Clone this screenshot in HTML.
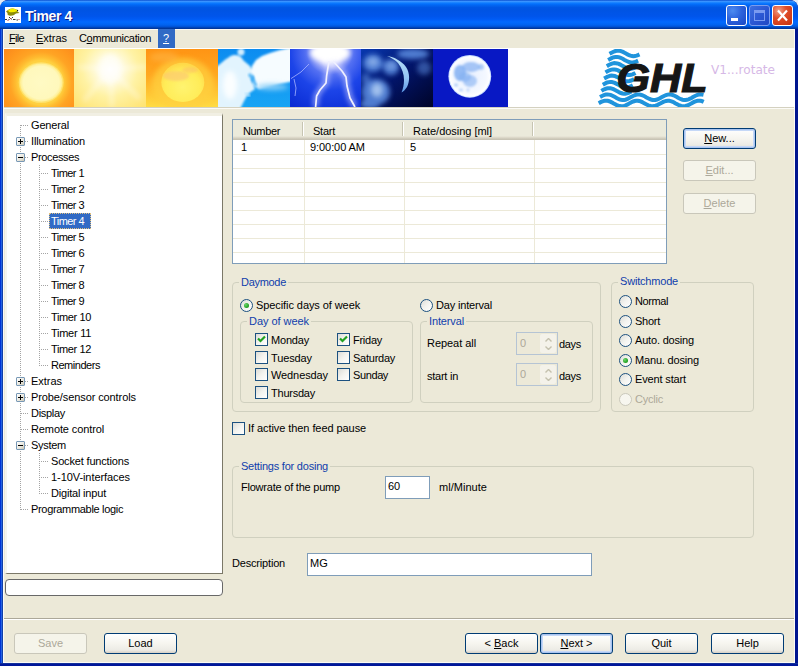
<!DOCTYPE html>
<html><head><meta charset="utf-8"><title>Timer 4</title>
<style>*{box-sizing:border-box;margin:0;padding:0}
html,body{width:798px;height:666px;overflow:hidden;background:#e4ecf8}
body{position:relative;font-family:"Liberation Sans",sans-serif;font-size:11px;color:#000;line-height:13px}
.a,.t{position:absolute;white-space:nowrap}
.t{font-size:11px;line-height:13px;height:13px}
#win{left:0;top:0;width:798px;height:666px;background:linear-gradient(to right,#0033d4 0,#0033d4 1px,#2462e2 1px,#2462e2 2px,#1240a8 2px,#1240a8 3px,#00158f 3px,#00158f 100%);border-radius:8px 8px 0 0;overflow:hidden}
#tb{left:0;top:0;width:798px;height:29px;border-radius:8px 8px 0 0;
background:linear-gradient(to bottom,#0a4fd0 0%,#3a93ff 5%,#288eff 7%,#127dff 10%,#036ffc 14%,#0262ee 20%,#0057e5 26%,#0054e3 34%,#0055eb 56%,#005bf5 66%,#026afe 76%,#0062ef 86%,#0052d6 92%,#0040ab 96%,#003092 100%)}
.ttl{font-weight:bold;font-size:14px;line-height:16px;height:16px;color:#fff;text-shadow:1px 1px 0 #0a1883}
#client{left:3px;top:29px;width:792px;height:634px;background:#ece9d8;border:1px solid #fbfaf6;border-top:0}
.tbtn{top:5px;width:21px;height:21px;border:1px solid #fff;border-radius:3px;background:radial-gradient(circle at 30% 25%,#4d8bf0 0%,#2d63dc 45%,#1a47c4 100%)}
u{text-decoration:underline}
.btn{height:21px;width:73px;border:1px solid #003c74;border-radius:3px;background:linear-gradient(to bottom,#ffffff 0%,#f6f5ef 50%,#ecebe5 85%,#d6d0c5 100%)}
.btn.def{box-shadow:inset 0 0 0 1px #a9c4f0, inset 0 0 0 2px #c5d8f7}
.btn.dis{border-color:#c9c7ba;background:#f5f4ea}
.bt{text-align:center;width:73px}
.gb{border:1px solid #d0d0bf;border-radius:4px}
.gl{color:#0046d5;background:#ece9d8}
.cb{width:13px;height:13px;border:1px solid #1c5180;background:linear-gradient(135deg,#dcdcd7 0%,#f3f3ef 50%,#ffffff 100%)}
.rb{width:13px;height:13px;border:1px solid #1c5180;border-radius:50%;background:linear-gradient(135deg,#dcdcd7 0%,#f3f3ef 50%,#ffffff 100%)}
.rb.on::after{content:"";position:absolute;left:3px;top:3px;width:5px;height:5px;border-radius:50%;background:radial-gradient(circle at 35% 35%,#6bd66b,#1f9e1f 70%)}
.rb.dis{border-color:#cac8bb;background:#f7f6ef}
.inp{border:1px solid #7f9db9;background:#fff}
.gray{color:#aca899}
</style></head><body>
<div class="a" id="win">
<div class="a" id="tb"></div>
<svg class="a" style="left:5px;top:7px" width="16" height="16" viewBox="0 0 16 16"><rect width="16" height="16" fill="#fff"/><path d="M3 3 Q7 0.5 11 2.5 L13.5 3 L12.5 4.5 L14.5 6 L11 6.5 Q8 9.5 4 8.5 Q2 8 2.5 6 L1 4.5 Z" fill="#8c8c08"/><path d="M3 3.2 Q7 0.2 11 2.4 L12.5 4 Q8 6 4 5 Z" fill="#f6ee00"/><rect x="12" y="3" width="1" height="1" fill="#222"/><path d="M0 12.5 h2 M3.5 12.5 h1 M6 12 h1 M8 12.5 h2.5 M11.5 13 h1.5 M4 10.5 h1 M7 10.5 h1" stroke="#333" stroke-width="1" fill="none"/><path d="M2.5 13.5 h1 M5 11.5 h1 M13.5 12.5 h1" stroke="#c04040" stroke-width="1" fill="none"/></svg>
<div class="t ttl" style="left:25px;top:8px;letter-spacing:-0.36px;">Timer 4</div>
<div class="a tbtn" style="left:726px"></div>
<div class="a" style="left:731px;top:18px;width:7px;height:3px;background:#fff"></div>
<div class="a tbtn" style="left:749px;border-color:#7c9cec;background:linear-gradient(135deg,#3d6fe0 0%,#2c58d4 50%,#2048c4 100%)"></div>
<div class="a" style="left:754px;top:10px;width:11px;height:11px;border:1px solid #7a9af0;border-top-width:3px"></div>
<div class="a tbtn" style="left:772px;background:radial-gradient(circle at 30% 25%,#f0a088 0%,#e04c28 40%,#c4300f 100%)"></div>
<svg class="a" style="left:772px;top:5px" width="21" height="21" viewBox="0 0 21 21"><path d="M6 5.5 L15 15.5 M15 5.5 L6 15.5" stroke="#fff" stroke-width="2.2" fill="none"/></svg>
<div class="a" style="left:0;top:663px;width:798px;height:3px;background:linear-gradient(to bottom,#12309a 0,#12309a 1px,#00179a 1px,#00179a 3px)"></div>
<div class="a" id="client"></div>
<div class="a" style="left:3px;top:29px;width:792px;height:1px;background:#fbfaf6"></div>
<div class="a" style="left:4px;top:107px;width:790px;height:1px;background:#d4d1c0"></div>
<div class="a" style="left:4px;top:108px;width:790px;height:1px;background:#fcfbf7"></div>
<div class="t" style="left:9px;top:32px;letter-spacing:-0.69px;"><u>F</u>ile</div>
<div class="t" style="left:36px;top:32px;letter-spacing:-0.03px;"><u>E</u>xtras</div>
<div class="t" style="left:79px;top:32px;letter-spacing:-0.34px;">C<u>o</u>mmunication</div>
<div class="a" style="left:158px;top:29px;width:17px;height:19px;background:#316ac5"></div>
<div class="t" style="left:163px;top:32px;color:#fff"><u>?</u></div>
<div class="a" style="left:4px;top:48px;width:791px;height:59px;background:#fff"></div>
<svg class="a" style="left:4px;top:49px" width="791" height="58" viewBox="0 0 791 58">
<defs>
<radialGradient id="g1" cx="37" cy="33.6" r="48" gradientUnits="userSpaceOnUse"><stop offset="0" stop-color="#ffe060"/><stop offset=".46" stop-color="#ffd040"/><stop offset=".53" stop-color="#ffbc30"/><stop offset=".64" stop-color="#ffa424"/><stop offset=".8" stop-color="#ff981e"/><stop offset="1" stop-color="#fc8a1c"/></radialGradient>
<radialGradient id="g1s" cx=".5" cy=".5" r=".5"><stop offset="0" stop-color="#fffac4"/><stop offset=".85" stop-color="#fff8bc"/><stop offset="1" stop-color="#ffee90"/></radialGradient>
<radialGradient id="g2" cx="106" cy="20" r="50" gradientUnits="userSpaceOnUse"><stop offset="0" stop-color="#ffffff"/><stop offset=".25" stop-color="#fffbe0"/><stop offset=".55" stop-color="#fff2a4"/><stop offset="1" stop-color="#ffe474"/></radialGradient>
<linearGradient id="g3" x1="0" y1="0" x2="0" y2="1"><stop offset="0" stop-color="#ff9414"/><stop offset=".45" stop-color="#ffa820"/><stop offset="1" stop-color="#ffdc44"/></linearGradient>
<radialGradient id="g3s" cx=".5" cy=".62" r=".6"><stop offset="0" stop-color="#fff470"/><stop offset=".7" stop-color="#ffec58"/><stop offset="1" stop-color="#ffd848"/></radialGradient>
<linearGradient id="g4" x1="0" y1="0" x2="0" y2="1"><stop offset="0" stop-color="#0c8cf0"/><stop offset="1" stop-color="#18a4f4"/></linearGradient>
<radialGradient id="g5" cx="326" cy="2" r="66" gradientUnits="userSpaceOnUse"><stop offset="0" stop-color="#ffffff"/><stop offset=".16" stop-color="#e8e4ff"/><stop offset=".36" stop-color="#5470f2"/><stop offset=".6" stop-color="#1c44e8"/><stop offset="1" stop-color="#0a2cd4"/></radialGradient>
<linearGradient id="g6" x1="0" y1="0" x2="1" y2="1"><stop offset="0" stop-color="#0838b0"/><stop offset=".5" stop-color="#021468"/><stop offset="1" stop-color="#000428"/></linearGradient>
<radialGradient id="g7m" cx=".5" cy=".5" r=".5"><stop offset="0" stop-color="#e8f0ff"/><stop offset=".8" stop-color="#f4f8ff"/><stop offset="1" stop-color="#ffffff"/></radialGradient>
<filter id="b1" x="-20%" y="-20%" width="140%" height="140%"><feGaussianBlur stdDeviation="1.2"/></filter>
<filter id="b2" x="-30%" y="-30%" width="160%" height="160%"><feGaussianBlur stdDeviation="2.5"/></filter>
<filter id="b05" x="-20%" y="-20%" width="140%" height="140%"><feGaussianBlur stdDeviation=".6"/></filter>
<clipPath id="c2"><rect x="70" y="0" width="72" height="58"/></clipPath>
<clipPath id="c3"><rect x="142" y="0" width="72" height="58"/></clipPath>
<clipPath id="c4"><rect x="214" y="0" width="72" height="58"/></clipPath>
<clipPath id="c5"><rect x="286" y="0" width="71" height="58"/></clipPath>
<clipPath id="c6"><rect x="357" y="0" width="72" height="58"/></clipPath>
<clipPath id="c7"><rect x="429" y="0" width="75" height="58"/></clipPath>
</defs>
<!-- tile1 sun -->
<rect x="0" y="0" width="70" height="58" fill="url(#g1)"/>
<ellipse cx="37.2" cy="33.6" rx="22.4" ry="20.4" fill="#ffe26c" filter="url(#b05)"/>
<ellipse cx="37.2" cy="33.6" rx="21.2" ry="19.2" fill="url(#g1s)" filter="url(#b05)"/>
<!-- tile2 bright -->
<g clip-path="url(#c2)">
<rect x="70" y="0" width="72" height="58" fill="url(#g2)"/>
<ellipse cx="106" cy="20" rx="11" ry="15" fill="#fff" opacity=".55" filter="url(#b2)"/>
<g stroke="#fff" stroke-width="5" opacity=".3" filter="url(#b2)"><path d="M106 20 L80 52 M106 20 L136 50 M106 20 L108 58 M106 20 L74 18 M106 20 L142 18"/></g>
</g>
<!-- tile3 hazy sun -->
<g clip-path="url(#c3)">
<rect x="142" y="0" width="72" height="58" fill="url(#g3)"/>
<ellipse cx="179" cy="36" rx="31" ry="27" fill="#ffd040" opacity=".7" filter="url(#b2)"/>
<ellipse cx="178.8" cy="33.3" rx="21.5" ry="19.6" fill="url(#g3s)" filter="url(#b05)"/>
<ellipse cx="172" cy="27" rx="13" ry="5" fill="#fcc474" opacity=".6" filter="url(#b1)"/>
<ellipse cx="186" cy="21" rx="8" ry="3" fill="#fcbc6c" opacity=".5" filter="url(#b1)"/>
<ellipse cx="160" cy="8" rx="14" ry="5" fill="#ffb848" opacity=".5" filter="url(#b2)"/>
</g>
<!-- tile4 clouds -->
<g clip-path="url(#c4)">
<rect x="214" y="0" width="72" height="58" fill="url(#g4)"/>
<g filter="url(#b1)">
<path d="M210 20 L222 10 L230 6 L236 8 L240 12 L246 17 L249 24 L247 31 L251 40 L244 45 L240 52 L235 62 L210 62 Z" fill="#e2f4fe"/>
<path d="M248 17 L252 11 L258 7 L266 4 L276 1 L290 -2 L290 32 L276 35 L264 38 L255 40 L249 36 L250 28 L247 22 Z" fill="#f6fcff"/>
<ellipse cx="237" cy="3" rx="3.5" ry="3.5" fill="#d0ecfe"/>
<ellipse cx="231" cy="12" rx="8" ry="6" fill="#e2f4fe"/>
</g>
<g filter="url(#b2)"><ellipse cx="268" cy="38" rx="16" ry="3" fill="#8cd0f8"/><ellipse cx="226" cy="36" rx="7" ry="14" fill="#fbfeff"/></g>
<path d="M245 25 L249 30 L252 37" fill="none" stroke="#40acf4" stroke-width="3" opacity=".85" filter="url(#b1)"/>
<path d="M241 44 L246 47" fill="none" stroke="#bfe6fc" stroke-width="3" opacity=".8" filter="url(#b1)"/>
</g>
<!-- tile5 lightning -->
<g clip-path="url(#c5)">
<rect x="286" y="0" width="71" height="58" fill="url(#g5)"/>
<ellipse cx="326" cy="4" rx="20" ry="9" fill="#fff" filter="url(#b2)"/>
<ellipse cx="327" cy="10" rx="8" ry="8" fill="#fff" opacity=".8" filter="url(#b2)"/>
<g fill="none" stroke="#c4c8ff" stroke-width="6" opacity=".6" filter="url(#b2)" stroke-linejoin="round">
<path d="M325 14 L322.6 27 L322 34 L316 41 L312.6 47 L311.6 58"/>
<path d="M329 14 L338 22 L342 28 L343 37 L346 49 L351 58"/>
</g>
<g fill="none" stroke="#f0f0ff" stroke-width="1.7" filter="url(#b05)" stroke-linejoin="round">
<path d="M325 12 L322.6 27 L322 34 L316 41 L312.6 47 L311.6 58"/>
<path d="M329 12 L338 22 L342 28 L343 37 L346 49 L351 58"/>
</g>
<path d="M305 15 L297 23 L287 29.6 M290 30 L292 39 L291 47" fill="none" stroke="#a8b4ff" stroke-width="1" opacity=".8"/>
</g>
<!-- tile6 crescent -->
<g clip-path="url(#c6)">
<rect x="357" y="0" width="72" height="58" fill="url(#g6)"/>
<g filter="url(#b2)" fill="#5888dc" opacity=".9">
<ellipse cx="369" cy="14" rx="10" ry="9"/>
<ellipse cx="387" cy="18" rx="8" ry="8"/>
<ellipse cx="372" cy="43" rx="14" ry="13"/>
<ellipse cx="366" cy="55" rx="10" ry="5"/>
<ellipse cx="409" cy="5" rx="16" ry="5"/>
<ellipse cx="420" cy="19" rx="7" ry="7" opacity=".6"/>
<ellipse cx="362" cy="30" rx="4" ry="6" opacity=".7"/>
</g>
<ellipse cx="373" cy="41" rx="6" ry="7" fill="#b4d0f4" opacity=".8" filter="url(#b2)"/>
<ellipse cx="369" cy="13" rx="5" ry="4" fill="#a4c4f2" opacity=".65" filter="url(#b2)"/>
<ellipse cx="387" cy="17" rx="4" ry="3" fill="#a0c0f0" opacity=".5" filter="url(#b2)"/>
<linearGradient id="g6c" x1="0" y1="0" x2="0" y2="1"><stop offset="0" stop-color="#b8e0f8"/><stop offset=".6" stop-color="#94c4f4"/><stop offset="1" stop-color="#5c98e8"/></linearGradient>
<path d="M383 7 C390 8 398 12 402 18 C406 24 406 32 403 38 C401 41 399 43 397.5 43.5 C399 40 400 36 400 31 C400 25 398 19 394 14 C391 11 387 8.5 383 7Z" fill="url(#g6c)" filter="url(#b05)"/>
</g>
<!-- tile7 full moon -->
<g clip-path="url(#c7)">
<rect x="429" y="0" width="75" height="58" fill="#0818c4"/>
<circle cx="465.8" cy="27.3" r="21.4" fill="#c8dcff" filter="url(#b05)"/>
<circle cx="465.8" cy="27.3" r="20.4" fill="url(#g7m)"/>
<g filter="url(#b1)" fill="#84b0f2">
<ellipse cx="456" cy="24" rx="6" ry="8" opacity=".85"/>
<ellipse cx="467" cy="18" rx="9" ry="5" opacity=".7"/>
<ellipse cx="466" cy="32" rx="7" ry="6" opacity=".6"/>
<ellipse cx="461" cy="28" rx="6" ry="5" opacity=".6"/>
<ellipse cx="477" cy="18" rx="3" ry="3" opacity=".6"/>
<ellipse cx="452" cy="36" rx="2" ry="1.5" opacity=".6"/>
<ellipse cx="457" cy="41" rx="2" ry="1.5" opacity=".5"/>
<ellipse cx="464" cy="41" rx="1.5" ry="1.5" opacity=".5"/>
</g>
</g>
<!-- GHL logo -->
<g fill="none" stroke="#2094dc" stroke-width="4">
<path d="M605.5 4.8 L607.0 4.0 L608.5 3.2 L610.0 2.5 L611.5 2.0 L613.0 1.7 L614.5 1.6 L616.0 1.8 L617.5 2.3 L619.0 2.9 L620.5 3.7 L622.0 4.5 L623.5 5.4 L625.0 6.1 L626.5 6.7 L628.0 7.1 L629.5 7.2 L631.0 7.1 L632.5 6.7 L634.0 6.1 L635.5 5.4"/>
<path d="M604.1 11.0 L605.6 10.2 L607.1 9.4 L608.6 8.7 L610.1 8.2 L611.6 7.9 L613.1 7.9 L614.6 8.1 L616.1 8.6 L617.6 9.3 L619.1 10.0 L620.6 10.9 L622.1 11.7 L623.6 12.4 L625.1 13.0 L626.6 13.4 L628.1 13.5 L629.6 13.3 L631.1 12.9 L632.6 12.3 L634.1 11.6"/>
<path d="M602.8 17.2 L604.3 16.3 L605.8 15.5 L607.3 14.9 L608.8 14.4 L610.3 14.1 L611.8 14.2 L613.3 14.4 L614.8 14.9 L616.3 15.6 L617.8 16.4 L619.3 17.2 L620.8 18.1 L622.3 18.8 L623.8 19.3 L625.3 19.6 L626.8 19.7 L628.3 19.5 L629.8 19.1 L631.3 18.5 L632.8 17.7"/>
<path d="M601.5 23.4 L603.0 22.5 L604.5 21.7 L606.0 21.1 L607.5 20.6 L609.0 20.4 L610.5 20.4 L612.0 20.7 L613.5 21.2 L615.0 21.9 L616.5 22.7 L618.0 23.6 L619.5 24.4 L621.0 25.1 L622.5 25.6 L624.0 25.9 L625.5 26.0 L627.0 25.8 L628.5 25.3 L630.0 24.7 L631.5 23.9"/>
<path d="M600.1 29.5 L601.6 28.7 L603.1 27.9 L604.6 27.3 L606.1 26.8 L607.6 26.6 L609.1 26.7 L610.6 27.0 L612.1 27.6 L613.6 28.3 L615.1 29.1 L616.6 29.9 L618.1 30.7 L619.6 31.4 L621.1 31.9 L622.6 32.2 L624.1 32.2 L625.6 32.0 L627.1 31.5 L628.6 30.9 L630.1 30.1"/>
<path d="M598.8 35.7 L600.2 34.9 L601.8 34.1 L603.2 33.5 L604.8 33.1 L606.2 32.9 L607.8 33.0 L609.2 33.3 L610.8 33.9 L612.2 34.6 L613.8 35.4 L615.2 36.3 L616.8 37.1 L618.2 37.7 L619.8 38.2 L621.2 38.5 L622.8 38.5 L624.2 38.2 L625.8 37.7 L627.2 37.1 L628.8 36.3"/>
<path d="M597.4 41.9 L598.9 41.0 L600.4 40.3 L601.9 39.7 L603.4 39.3 L604.9 39.2 L606.4 39.3 L607.9 39.6 L609.4 40.2 L610.9 40.9 L612.4 41.8 L613.9 42.6 L615.4 43.4 L616.9 44.0 L618.4 44.5 L619.9 44.7 L621.4 44.7 L622.9 44.4 L624.4 43.9 L625.9 43.2 L627.4 42.4"/>
<path d="M596.0 48.0 L597.5 47.2 L599.0 46.5 L600.5 45.9 L602.0 45.5 L603.5 45.4 L605.0 45.6 L606.5 45.9 L608.0 46.5 L609.5 47.3 L611.0 48.1 L612.5 48.9 L614.0 49.7 L615.5 50.4 L617.0 50.8 L618.5 51.0 L620.0 51.0 L621.5 50.7 L623.0 50.1 L624.5 49.4 L626.0 48.6 L627.5 47.8 L629.0 47.0 L630.5 46.3 L632.0 45.8 L633.5 45.5 L635.0 45.4 L636.5 45.7 L638.0 46.1 L639.5 46.8 L641.0 47.5 L642.5 48.4 L644.0 49.2 L645.5 50.0 L647.0 50.5 L648.5 50.9 L650.0 51.0 L651.5 50.9 L653.0 50.5 L654.5 49.9 L656.0 49.2 L657.5 48.3 L659.0 47.5 L660.5 46.7 L662.0 46.1 L663.5 45.6 L665.0 45.4 L666.5 45.5 L668.0 45.8 L669.5 46.3 L671.0 47.0 L672.5 47.8 L674.0 48.7 L675.5 49.5 L677.0 50.2 L678.5 50.7 L680.0 51.0 L681.5 51.0 L683.0 50.8 L684.5 50.3 L686.0 49.7 L687.5 48.9 L689.0 48.0 L690.5 47.2 L692.0 46.5 L693.5 45.9 L695.0 45.5 L696.5 45.4 L698.0 45.6 L699.5 45.9"/>
<path d="M594.7 54.2 L596.2 53.4 L597.7 52.7 L599.2 52.1 L600.7 51.8 L602.2 51.7 L603.7 51.8 L605.2 52.2 L606.7 52.9 L608.2 53.6 L609.7 54.5 L611.2 55.3 L612.7 56.1 L614.2 56.7 L615.7 57.1 L617.2 57.3 L618.7 57.2 L620.2 56.9 L621.7 56.3 L623.2 55.6 L624.7 54.8 L626.2 53.9 L627.7 53.1 L629.2 52.5 L630.7 52.0 L632.2 51.7 L633.7 51.7 L635.2 52.0 L636.7 52.4 L638.2 53.1 L639.7 53.9 L641.2 54.7 L642.7 55.6 L644.2 56.3 L645.7 56.8 L647.2 57.2 L648.7 57.3 L650.2 57.1 L651.7 56.7 L653.2 56.1 L654.7 55.3 L656.2 54.5 L657.7 53.7 L659.2 52.9 L660.7 52.3 L662.2 51.9 L663.7 51.7 L665.2 51.8 L666.7 52.1 L668.2 52.6 L669.7 53.3 L671.2 54.2 L672.7 55.0 L674.2 55.8 L675.7 56.5 L677.2 57.0 L678.7 57.2 L680.2 57.3 L681.7 57.0 L683.2 56.5 L684.7 55.9 L686.2 55.1 L687.7 54.2 L689.2 53.4 L690.7 52.7 L692.2 52.1 L693.7 51.8 L695.2 51.7 L696.7 51.8 L698.2 52.2 L699.7 52.9"/>
</g>
<text x="612.5" y="43" font-family="'Liberation Sans',sans-serif" font-weight="bold" font-style="italic" font-size="40.5" fill="#161616" stroke="#161616" stroke-width="1.2" textLength="91" lengthAdjust="spacingAndGlyphs">GHL</text>
<text x="707" y="25" font-family="'DejaVu Sans','Liberation Sans',sans-serif" font-size="11.5" fill="#d6b8e6" textLength="64" lengthAdjust="spacingAndGlyphs">V1...rotate</text>
</svg>
<div class="a" style="left:5px;top:113px;width:218px;height:461px;background:#fff;border:1px solid;border-top:3px solid #f1efe3;border-right-color:#7b7868;border-bottom-color:#7b7868;border-left:2px solid #f6f5ee"></div>
<div class="a" style="left:20px;top:125px;width:1px;height:385px;background:repeating-linear-gradient(to bottom,#a4a4a4 0 1px,transparent 1px 2px)"></div>
<div class="a" style="left:39px;top:165px;width:1px;height:201px;background:repeating-linear-gradient(to bottom,#a4a4a4 0 1px,transparent 1px 2px)"></div>
<div class="a" style="left:39px;top:453px;width:1px;height:41px;background:repeating-linear-gradient(to bottom,#a4a4a4 0 1px,transparent 1px 2px)"></div>
<div class="a" style="left:21px;top:125px;height:1px;width:8px;background:repeating-linear-gradient(to right,#a4a4a4 0 1px,transparent 1px 2px)"></div>
<div class="t" style="left:31px;top:119px;letter-spacing:-0.16px;">General</div>
<div class="a" style="left:21px;top:141px;height:1px;width:8px;background:repeating-linear-gradient(to right,#a4a4a4 0 1px,transparent 1px 2px)"></div>
<div class="t" style="left:31px;top:135px;letter-spacing:-0.14px;">Illumination</div>
<div class="a" style="left:16px;top:137px;width:9px;height:9px;border:1px solid #7898b5;border-radius:1px;background:linear-gradient(135deg,#fff 0%,#e8e6dc 60%,#c9c5b4 100%)"></div>
<div class="a" style="left:18px;top:141px;width:5px;height:1px;background:#000"></div>
<div class="a" style="left:20px;top:139px;width:1px;height:5px;background:#000"></div>
<div class="a" style="left:21px;top:157px;height:1px;width:8px;background:repeating-linear-gradient(to right,#a4a4a4 0 1px,transparent 1px 2px)"></div>
<div class="t" style="left:31px;top:151px;letter-spacing:-0.37px;">Processes</div>
<div class="a" style="left:16px;top:153px;width:9px;height:9px;border:1px solid #7898b5;border-radius:1px;background:linear-gradient(135deg,#fff 0%,#e8e6dc 60%,#c9c5b4 100%)"></div>
<div class="a" style="left:18px;top:157px;width:5px;height:1px;background:#000"></div>
<div class="a" style="left:41px;top:173px;height:1px;width:8px;background:repeating-linear-gradient(to right,#a4a4a4 0 1px,transparent 1px 2px)"></div>
<div class="t" style="left:51px;top:167px;letter-spacing:-0.55px;">Timer 1</div>
<div class="a" style="left:41px;top:189px;height:1px;width:8px;background:repeating-linear-gradient(to right,#a4a4a4 0 1px,transparent 1px 2px)"></div>
<div class="t" style="left:51px;top:183px;letter-spacing:-0.55px;">Timer 2</div>
<div class="a" style="left:41px;top:205px;height:1px;width:8px;background:repeating-linear-gradient(to right,#a4a4a4 0 1px,transparent 1px 2px)"></div>
<div class="t" style="left:51px;top:199px;letter-spacing:-0.55px;">Timer 3</div>
<div class="a" style="left:41px;top:221px;height:1px;width:8px;background:repeating-linear-gradient(to right,#a4a4a4 0 1px,transparent 1px 2px)"></div>
<div class="a" style="left:49px;top:213px;width:42px;height:16px;background:#316ac5;border:1px dotted #e0c080"></div>
<div class="t" style="left:51px;top:215px;letter-spacing:-0.55px;color:#fff">Timer 4</div>
<div class="a" style="left:41px;top:237px;height:1px;width:8px;background:repeating-linear-gradient(to right,#a4a4a4 0 1px,transparent 1px 2px)"></div>
<div class="t" style="left:51px;top:231px;letter-spacing:-0.55px;">Timer 5</div>
<div class="a" style="left:41px;top:253px;height:1px;width:8px;background:repeating-linear-gradient(to right,#a4a4a4 0 1px,transparent 1px 2px)"></div>
<div class="t" style="left:51px;top:247px;letter-spacing:-0.55px;">Timer 6</div>
<div class="a" style="left:41px;top:269px;height:1px;width:8px;background:repeating-linear-gradient(to right,#a4a4a4 0 1px,transparent 1px 2px)"></div>
<div class="t" style="left:51px;top:263px;letter-spacing:-0.55px;">Timer 7</div>
<div class="a" style="left:41px;top:285px;height:1px;width:8px;background:repeating-linear-gradient(to right,#a4a4a4 0 1px,transparent 1px 2px)"></div>
<div class="t" style="left:51px;top:279px;letter-spacing:-0.55px;">Timer 8</div>
<div class="a" style="left:41px;top:301px;height:1px;width:8px;background:repeating-linear-gradient(to right,#a4a4a4 0 1px,transparent 1px 2px)"></div>
<div class="t" style="left:51px;top:295px;letter-spacing:-0.55px;">Timer 9</div>
<div class="a" style="left:41px;top:317px;height:1px;width:8px;background:repeating-linear-gradient(to right,#a4a4a4 0 1px,transparent 1px 2px)"></div>
<div class="t" style="left:51px;top:311px;letter-spacing:-0.38px;">Timer 10</div>
<div class="a" style="left:41px;top:333px;height:1px;width:8px;background:repeating-linear-gradient(to right,#a4a4a4 0 1px,transparent 1px 2px)"></div>
<div class="t" style="left:51px;top:327px;letter-spacing:-0.27px;">Timer 11</div>
<div class="a" style="left:41px;top:349px;height:1px;width:8px;background:repeating-linear-gradient(to right,#a4a4a4 0 1px,transparent 1px 2px)"></div>
<div class="t" style="left:51px;top:343px;letter-spacing:-0.38px;">Timer 12</div>
<div class="a" style="left:41px;top:365px;height:1px;width:8px;background:repeating-linear-gradient(to right,#a4a4a4 0 1px,transparent 1px 2px)"></div>
<div class="t" style="left:51px;top:359px;letter-spacing:-0.47px;">Reminders</div>
<div class="a" style="left:21px;top:381px;height:1px;width:8px;background:repeating-linear-gradient(to right,#a4a4a4 0 1px,transparent 1px 2px)"></div>
<div class="t" style="left:31px;top:375px;letter-spacing:-0.03px;">Extras</div>
<div class="a" style="left:16px;top:377px;width:9px;height:9px;border:1px solid #7898b5;border-radius:1px;background:linear-gradient(135deg,#fff 0%,#e8e6dc 60%,#c9c5b4 100%)"></div>
<div class="a" style="left:18px;top:381px;width:5px;height:1px;background:#000"></div>
<div class="a" style="left:20px;top:379px;width:1px;height:5px;background:#000"></div>
<div class="a" style="left:21px;top:397px;height:1px;width:8px;background:repeating-linear-gradient(to right,#a4a4a4 0 1px,transparent 1px 2px)"></div>
<div class="t" style="left:31px;top:391px;letter-spacing:-0.1px;">Probe/sensor controls</div>
<div class="a" style="left:16px;top:393px;width:9px;height:9px;border:1px solid #7898b5;border-radius:1px;background:linear-gradient(135deg,#fff 0%,#e8e6dc 60%,#c9c5b4 100%)"></div>
<div class="a" style="left:18px;top:397px;width:5px;height:1px;background:#000"></div>
<div class="a" style="left:20px;top:395px;width:1px;height:5px;background:#000"></div>
<div class="a" style="left:21px;top:413px;height:1px;width:8px;background:repeating-linear-gradient(to right,#a4a4a4 0 1px,transparent 1px 2px)"></div>
<div class="t" style="left:31px;top:407px;letter-spacing:-0.3px;">Display</div>
<div class="a" style="left:21px;top:429px;height:1px;width:8px;background:repeating-linear-gradient(to right,#a4a4a4 0 1px,transparent 1px 2px)"></div>
<div class="t" style="left:31px;top:423px;letter-spacing:-0.11px;">Remote control</div>
<div class="a" style="left:21px;top:445px;height:1px;width:8px;background:repeating-linear-gradient(to right,#a4a4a4 0 1px,transparent 1px 2px)"></div>
<div class="t" style="left:31px;top:439px;letter-spacing:-0.28px;">System</div>
<div class="a" style="left:16px;top:441px;width:9px;height:9px;border:1px solid #7898b5;border-radius:1px;background:linear-gradient(135deg,#fff 0%,#e8e6dc 60%,#c9c5b4 100%)"></div>
<div class="a" style="left:18px;top:445px;width:5px;height:1px;background:#000"></div>
<div class="a" style="left:41px;top:461px;height:1px;width:8px;background:repeating-linear-gradient(to right,#a4a4a4 0 1px,transparent 1px 2px)"></div>
<div class="t" style="left:51px;top:455px;letter-spacing:-0.17px;">Socket functions</div>
<div class="a" style="left:41px;top:477px;height:1px;width:8px;background:repeating-linear-gradient(to right,#a4a4a4 0 1px,transparent 1px 2px)"></div>
<div class="t" style="left:51px;top:471px;letter-spacing:-0.07px;">1-10V-interfaces</div>
<div class="a" style="left:41px;top:493px;height:1px;width:8px;background:repeating-linear-gradient(to right,#a4a4a4 0 1px,transparent 1px 2px)"></div>
<div class="t" style="left:51px;top:487px;letter-spacing:-0.19px;">Digital input</div>
<div class="a" style="left:21px;top:509px;height:1px;width:8px;background:repeating-linear-gradient(to right,#a4a4a4 0 1px,transparent 1px 2px)"></div>
<div class="t" style="left:31px;top:503px;letter-spacing:-0.32px;">Programmable logic</div>
<div class="a" style="left:5px;top:579px;width:218px;height:17px;background:#fff;border:1px solid #686868;border-radius:4px"></div>
<div class="a" style="left:232px;top:119px;width:435px;height:145px;background:#fff;border:1px solid #7f9db9"></div>
<div class="a" style="left:233px;top:120px;width:433px;height:20px;background:linear-gradient(to bottom,#ebeadb 0px,#ebeadb 16px,#e2ded0 17px,#d6d2c2 18px,#cbc7b8 19px,#c5c1b2 20px)"></div>
<div class="a" style="left:302px;top:122px;width:1px;height:14px;background:#c7c5b2"></div>
<div class="a" style="left:303px;top:122px;width:1px;height:14px;background:#fff"></div>
<div class="a" style="left:304px;top:140px;width:1px;height:123px;background:#ece9d8"></div>
<div class="a" style="left:402px;top:122px;width:1px;height:14px;background:#c7c5b2"></div>
<div class="a" style="left:403px;top:122px;width:1px;height:14px;background:#fff"></div>
<div class="a" style="left:404px;top:140px;width:1px;height:123px;background:#ece9d8"></div>
<div class="a" style="left:532px;top:122px;width:1px;height:14px;background:#c7c5b2"></div>
<div class="a" style="left:533px;top:122px;width:1px;height:14px;background:#fff"></div>
<div class="a" style="left:534px;top:140px;width:1px;height:123px;background:#ece9d8"></div>
<div class="a" style="left:233px;top:154px;width:433px;height:1px;background:#ece9d8"></div>
<div class="a" style="left:233px;top:168px;width:433px;height:1px;background:#ece9d8"></div>
<div class="a" style="left:233px;top:182px;width:433px;height:1px;background:#ece9d8"></div>
<div class="a" style="left:233px;top:196px;width:433px;height:1px;background:#ece9d8"></div>
<div class="a" style="left:233px;top:210px;width:433px;height:1px;background:#ece9d8"></div>
<div class="a" style="left:233px;top:224px;width:433px;height:1px;background:#ece9d8"></div>
<div class="a" style="left:233px;top:238px;width:433px;height:1px;background:#ece9d8"></div>
<div class="a" style="left:233px;top:252px;width:433px;height:1px;background:#ece9d8"></div>
<div class="t" style="left:243px;top:125px;letter-spacing:-0.35px;">Number</div>
<div class="t" style="left:313px;top:125px;letter-spacing:-0.25px;">Start</div>
<div class="t" style="left:413px;top:125px;letter-spacing:-0.03px;">Rate/dosing [ml]</div>
<div class="t" style="left:241px;top:141px;">1</div>
<div class="t" style="left:310px;top:141px;letter-spacing:-0.07px;">9:00:00 AM</div>
<div class="t" style="left:410px;top:141px;">5</div>
<div class="a btn def" style="left:683px;top:128px;width:73px"></div>
<div class="t bt" style="left:683px;top:132px;width:73px;"><u>N</u>ew...</div>
<div class="a btn dis" style="left:683px;top:160px;width:73px"></div>
<div class="t bt gray" style="left:683px;top:164px;width:73px;"><u>E</u>dit...</div>
<div class="a btn dis" style="left:683px;top:193px;width:73px"></div>
<div class="t bt gray" style="left:683px;top:197px;width:73px;"><u>D</u>elete</div>
<div class="a gb" style="left:232px;top:282px;width:369px;height:130px"></div>
<div class="a" style="left:239px;top:281px;width:49px;height:3px;background:#ece9d8"></div>
<div class="t" style="left:241px;top:276px;letter-spacing:-0.3px;color:#1040ac">Daymode</div>
<div class="a rb on" style="left:240px;top:299px"></div>
<div class="t" style="left:256px;top:299px;letter-spacing:-0.08px;">Specific days of week</div>
<div class="a rb" style="left:420px;top:299px"></div>
<div class="t" style="left:436px;top:299px;letter-spacing:-0.17px;">Day interval</div>
<div class="a gb" style="left:240px;top:321px;width:173px;height:82px"></div>
<div class="a" style="left:247px;top:320px;width:64px;height:3px;background:#ece9d8"></div>
<div class="t" style="left:249px;top:315px;letter-spacing:-0.05px;color:#1040ac">Day of week</div>
<div class="a cb" style="left:255px;top:333px"></div>
<svg class="a" style="left:255px;top:333px" width="13" height="13" viewBox="0 0 13 13"><path d="M3 5.5 L5.5 8 L10 3.5" fill="none" stroke="#21a121" stroke-width="2.2"/></svg>
<div class="t" style="left:271px;top:334px;letter-spacing:-0.19px;">Monday</div>
<div class="a cb" style="left:255px;top:351px"></div>
<div class="t" style="left:271px;top:352px;letter-spacing:-0.11px;">Tuesday</div>
<div class="a cb" style="left:255px;top:368px"></div>
<div class="t" style="left:271px;top:369px;letter-spacing:-0.1px;">Wednesday</div>
<div class="a cb" style="left:255px;top:386px"></div>
<div class="t" style="left:271px;top:387px;letter-spacing:-0.23px;">Thursday</div>
<div class="a cb" style="left:337px;top:333px"></div>
<svg class="a" style="left:337px;top:333px" width="13" height="13" viewBox="0 0 13 13"><path d="M3 5.5 L5.5 8 L10 3.5" fill="none" stroke="#21a121" stroke-width="2.2"/></svg>
<div class="t" style="left:353px;top:334px;letter-spacing:-0.26px;">Friday</div>
<div class="a cb" style="left:337px;top:351px"></div>
<div class="t" style="left:353px;top:352px;letter-spacing:-0.25px;">Saturday</div>
<div class="a cb" style="left:337px;top:368px"></div>
<div class="t" style="left:353px;top:369px;letter-spacing:-0.39px;">Sunday</div>
<div class="a gb" style="left:420px;top:321px;width:173px;height:82px"></div>
<div class="a" style="left:427px;top:320px;width:39px;height:3px;background:#ece9d8"></div>
<div class="t" style="left:429px;top:315px;letter-spacing:-0.13px;color:#1040ac">Interval</div>
<div class="t" style="left:427px;top:337px;letter-spacing:-0.05px;">Repeat all</div>
<div class="t" style="left:427px;top:370px;letter-spacing:-0.25px;">start in</div>
<div class="a" style="left:516px;top:332px;width:42px;height:23px;border:1px solid #b5c4d4;background:#ece9d8"></div>
<div class="t gray" style="left:520px;top:337px;">0</div>
<div class="a" style="left:540px;top:334px;width:16px;height:19px;border-radius:2px;background:#f4f2ea"></div>
<svg class="a" style="left:545px;top:338px" width="7" height="4" viewBox="0 0 7 4"><path d="M0.5 3.5 L3.5 0.5 L6.5 3.5" fill="none" stroke="#c4c1ae" stroke-width="1.4"/></svg>
<svg class="a" style="left:545px;top:346px" width="7" height="4" viewBox="0 0 7 4"><path d="M0.5 0.5 L3.5 3.5 L6.5 0.5" fill="none" stroke="#c4c1ae" stroke-width="1.4"/></svg>
<div class="a" style="left:516px;top:363px;width:42px;height:23px;border:1px solid #b5c4d4;background:#ece9d8"></div>
<div class="t gray" style="left:520px;top:368px;">0</div>
<div class="a" style="left:540px;top:365px;width:16px;height:19px;border-radius:2px;background:#f4f2ea"></div>
<svg class="a" style="left:545px;top:369px" width="7" height="4" viewBox="0 0 7 4"><path d="M0.5 3.5 L3.5 0.5 L6.5 3.5" fill="none" stroke="#c4c1ae" stroke-width="1.4"/></svg>
<svg class="a" style="left:545px;top:377px" width="7" height="4" viewBox="0 0 7 4"><path d="M0.5 0.5 L3.5 3.5 L6.5 0.5" fill="none" stroke="#c4c1ae" stroke-width="1.4"/></svg>
<div class="t" style="left:559px;top:338px;letter-spacing:-0.31px;">days</div>
<div class="t" style="left:559px;top:370px;letter-spacing:-0.31px;">days</div>
<div class="a gb" style="left:611px;top:282px;width:143px;height:130px"></div>
<div class="a" style="left:618px;top:281px;width:62px;height:3px;background:#ece9d8"></div>
<div class="t" style="left:620px;top:275px;letter-spacing:-0.19px;color:#1040ac">Switchmode</div>
<div class="a rb" style="left:619px;top:295px"></div>
<div class="t" style="left:635px;top:295px;letter-spacing:-0.41px;">Normal</div>
<div class="a rb" style="left:619px;top:315px"></div>
<div class="t" style="left:635px;top:315px;letter-spacing:-0.26px;">Short</div>
<div class="a rb" style="left:619px;top:334px"></div>
<div class="t" style="left:635px;top:334px;letter-spacing:-0.18px;">Auto. dosing</div>
<div class="a rb on" style="left:619px;top:354px"></div>
<div class="t" style="left:635px;top:354px;letter-spacing:-0.17px;">Manu. dosing</div>
<div class="a rb" style="left:619px;top:373px"></div>
<div class="t" style="left:635px;top:373px;letter-spacing:-0.14px;">Event start</div>
<div class="a rb dis" style="left:619px;top:393px"></div>
<div class="t gray" style="left:635px;top:393px;letter-spacing:-0.22px;">Cyclic</div>
<div class="a cb" style="left:232px;top:422px"></div>
<div class="t" style="left:248px;top:422px;letter-spacing:-0.07px;">If active then feed pause</div>
<div class="a gb" style="left:232px;top:466px;width:522px;height:72px"></div>
<div class="a" style="left:239px;top:465px;width:91px;height:3px;background:#ece9d8"></div>
<div class="t" style="left:241px;top:460px;letter-spacing:-0.22px;color:#1040ac">Settings for dosing</div>
<div class="t" style="left:241px;top:481px;letter-spacing:-0.22px;">Flowrate of the pump</div>
<div class="a inp" style="left:385px;top:476px;width:45px;height:23px"></div>
<div class="t" style="left:388px;top:480px;">60</div>
<div class="t" style="left:439px;top:481px;letter-spacing:0.03px;">ml/Minute</div>
<div class="t" style="left:232px;top:557px;letter-spacing:-0.18px;">Description</div>
<div class="a inp" style="left:307px;top:553px;width:285px;height:23px"></div>
<div class="t" style="left:310px;top:557px;">MG</div>
<div class="a" style="left:4px;top:618px;width:790px;height:1px;background:#aca899"></div>
<div class="a" style="left:4px;top:619px;width:790px;height:1px;background:#fff"></div>
<div class="a btn dis" style="left:14px;top:633px;width:73px"></div>
<div class="t bt gray" style="left:14px;top:637px;width:73px;">Save</div>
<div class="a btn " style="left:104px;top:633px;width:73px"></div>
<div class="t bt" style="left:104px;top:637px;width:73px;">Load</div>
<div class="a btn " style="left:465px;top:633px;width:73px"></div>
<div class="t bt" style="left:465px;top:637px;width:73px;">&lt; <u>B</u>ack</div>
<div class="a btn def" style="left:540px;top:633px;width:73px"></div>
<div class="t bt" style="left:540px;top:637px;width:73px;"><u>N</u>ext &gt;</div>
<div class="a btn " style="left:625px;top:633px;width:73px"></div>
<div class="t bt" style="left:625px;top:637px;width:73px;">Quit</div>
<div class="a btn " style="left:711px;top:633px;width:73px"></div>
<div class="t bt" style="left:711px;top:637px;width:73px;">Help</div>
</div>
</body></html>
